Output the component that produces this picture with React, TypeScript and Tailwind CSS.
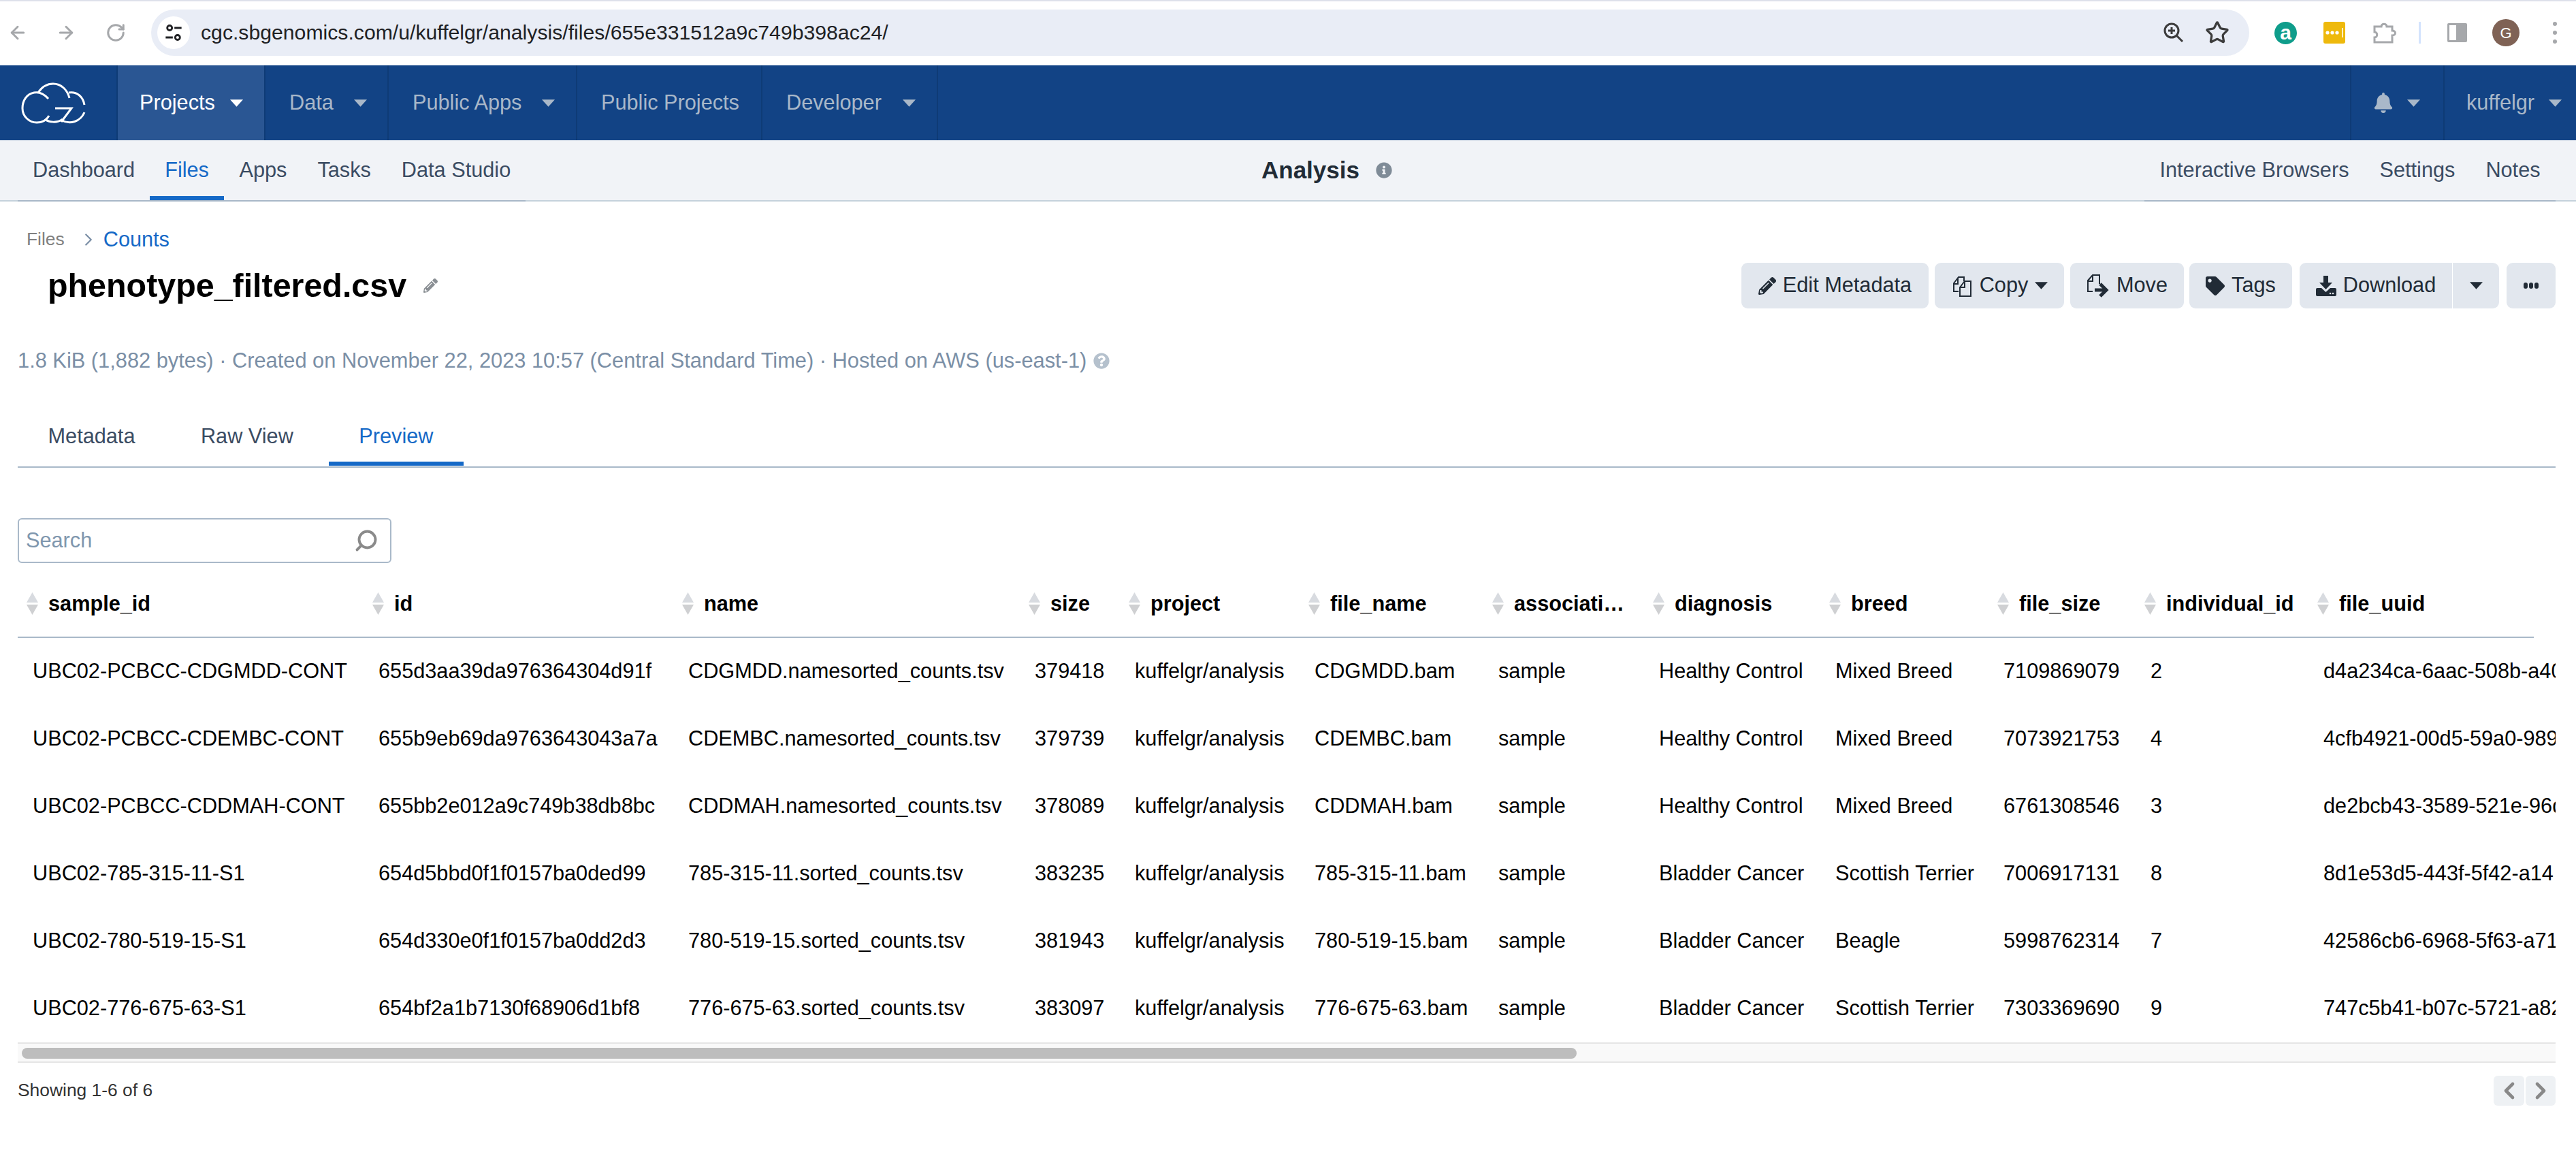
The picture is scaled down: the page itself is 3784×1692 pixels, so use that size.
import { ArrowLeft, ArrowRight, ChevronLeft, ChevronRight, RotateCw, Search, Star } from "lucide-react";
import { FaBell, FaInfoCircle, FaPencilAlt, FaQuestionCircle, FaTag } from "react-icons/fa";

const tableRows = [
  ["UBC02-PCBCC-CDGMDD-CONT", "655d3aa39da976364304d91f", "CDGMDD.namesorted_counts.tsv", "379418", "kuffelgr/analysis", "CDGMDD.bam", "sample", "Healthy Control", "Mixed Breed", "7109869079", "2", "d4a234ca-6aac-508b-a40"],
  ["UBC02-PCBCC-CDEMBC-CONT", "655b9eb69da9763643043a7a", "CDEMBC.namesorted_counts.tsv", "379739", "kuffelgr/analysis", "CDEMBC.bam", "sample", "Healthy Control", "Mixed Breed", "7073921753", "4", "4cfb4921-00d5-59a0-989"],
  ["UBC02-PCBCC-CDDMAH-CONT", "655bb2e012a9c749b38db8bc", "CDDMAH.namesorted_counts.tsv", "378089", "kuffelgr/analysis", "CDDMAH.bam", "sample", "Healthy Control", "Mixed Breed", "6761308546", "3", "de2bcb43-3589-521e-96d"],
  ["UBC02-785-315-11-S1", "654d5bbd0f1f0157ba0ded99", "785-315-11.sorted_counts.tsv", "383235", "kuffelgr/analysis", "785-315-11.bam", "sample", "Bladder Cancer", "Scottish Terrier", "7006917131", "8", "8d1e53d5-443f-5f42-a14"],
  ["UBC02-780-519-15-S1", "654d330e0f1f0157ba0dd2d3", "780-519-15.sorted_counts.tsv", "381943", "kuffelgr/analysis", "780-519-15.bam", "sample", "Bladder Cancer", "Beagle", "5998762314", "7", "42586cb6-6968-5f63-a71"],
  ["UBC02-776-675-63-S1", "654bf2a1b7130f68906d1bf8", "776-675-63.sorted_counts.tsv", "383097", "kuffelgr/analysis", "776-675-63.bam", "sample", "Bladder Cancer", "Scottish Terrier", "7303369690", "9", "747c5b41-b07c-5721-a82"],
];

const tableColumns = ["sample_id", "id", "name", "size", "project", "file_name", "association", "diagnosis", "breed", "file_size", "individual_id", "file_uuid"];

const gridCols = "grid grid-cols-[508px_455px_509px_147px_264px_270px_236px_259px_247px_216px_254px_600px] pl-[22px]";

function Caret({ className }: { className?: string }) {
  return (
    <svg viewBox="0 0 20 11" className={className} fill="currentColor">
      <path d="M0 0h20L10 11z" />
    </svg>
  );
}

function SortIcon() {
  return (
    <svg viewBox="0 0 17 33" className="h-[33px] w-[17px] shrink-0">
      <path d="M8.5 0L17 15H0z" fill="#d8dbe0" />
      <path d="M0 18h17L8.5 33z" fill="#cfd0d2" />
    </svg>
  );
}

function CloudLogo() {
  return (
    <svg viewBox="0 0 180 100" className="h-[100px] w-[180px] shrink-0" fill="none" stroke="#fff" strokeWidth="3">
      <path d="M71 44C64 36 56 34 50 35C39 37 33 47 33 58C33 70 43 79 54 79C62 79 68 76 72 69" />
      <path d="M56 35C62 26 70 22 78 22C90 22 99 31 102 43" />
      <path d="M101 35C113 33 122 41 124 53" />
      <path d="M81 58H105L90 78" />
      <path d="M66 74C72 79 84 80 92 74" />
      <path d="M91 76C103 82 118 78 124 64" />
    </svg>
  );
}

function CopyIcon() {
  return (
    <svg viewBox="0 0 32 32" className="h-[32px] w-[32px]" fill="none" stroke="currentColor" strokeWidth="2">
      <path d="M11 24H4V12L11 3H19V9" />
      <path d="M4 13H10V4" />
      <path d="M13 18L20 9H29V31H13Z" fill="#e2e7ee" />
      <path d="M13 18H20V10" />
    </svg>
  );
}

function MoveIcon() {
  return (
    <svg viewBox="0 0 34 34" className="h-[34px] w-[34px]" fill="none" stroke="currentColor" strokeWidth="2">
      <path d="M9 25H2V9L9 1H19V14" />
      <path d="M2 10H9V2" />
      <path d="M12 23H27" strokeWidth="5" />
      <path d="M20 14L29 23L20 32" strokeWidth="5" />
    </svg>
  );
}

function DownloadIcon() {
  return (
    <svg viewBox="0 0 30 30" className="h-[30px] w-[30px]" fill="currentColor">
      <path d="M11 0h7v10h6L14.500 20 5 10h6z" />
      <path d="M2 18h6l6.500 6L21 18h7a2 2 0 0 1 2 2v8a2 2 0 0 1-2 2H2a2 2 0 0 1-2-2v-8a2 2 0 0 1 2-2z" />
      <circle cx="21" cy="26" r="1.300" fill="#e2e7ee" />
      <circle cx="25" cy="26" r="1.300" fill="#e2e7ee" />
    </svg>
  );
}

function ActionButton({ width, children, className = "" }: { width: string; children: React.ReactNode; className?: string }) {
  return (
    <div className={`flex h-[67px] items-center justify-center gap-[10px] rounded-[9px] bg-[#e2e7ee] text-[30.7px] text-[#212b36] ${width} ${className}`}>
      {children}
    </div>
  );
}

function BrowserBar() {
  return (
    <div className="flex h-[94px] items-center border-t-2 border-[#dee1ea] bg-white">
      <ArrowLeft className="ml-[11px] h-[30px] w-[30px] text-[#a6a8ab]" strokeWidth={2.4} />
      <ArrowRight className="ml-[41px] h-[30px] w-[30px] text-[#a6a8ab]" strokeWidth={2.4} />
      <RotateCw className="ml-[43px] h-[30px] w-[30px] text-[#a6a8ab]" strokeWidth={2.4} />
      <div className="ml-[37px] flex h-[68px] w-[3082px] items-center rounded-full bg-[#e9edf6] pl-[9px]">
        <div className="flex h-[48px] w-[48px] items-center justify-center rounded-full bg-white">
          <svg viewBox="0 0 24 24" className="h-[28px] w-[28px]" fill="none" stroke="#202124" strokeWidth="2.400">
            <circle cx="7" cy="6" r="3" />
            <path d="M13 6h9M2 18h9" />
            <circle cx="17" cy="18" r="3" />
          </svg>
        </div>
        <span className="ml-[16px] text-[30.2px] text-[#202124]">cgc.sbgenomics.com/u/kuffelgr/analysis/files/655e331512a9c749b398ac24/</span>
        <svg viewBox="0 0 30 30" className="ml-auto h-[30px] w-[30px]" fill="none" stroke="#3c3c3c" strokeWidth="3">
          <circle cx="12" cy="12" r="10" />
          <path d="M12 7v10M7 12h10" />
          <path d="M19 19l9 9" />
        </svg>
        <Star className="ml-[31px] mr-[29px] h-[36px] w-[36px] text-[#3c3c3c]" strokeWidth={2.2} />
      </div>
      <div className="ml-[37px] flex h-[33px] w-[33px] items-center justify-center rounded-full bg-[#0f9d8b] text-[30px] font-bold leading-none text-white">a</div>
      <div className="ml-[39px] flex h-[32px] w-[32px] items-center justify-center rounded-[3px] bg-[#eeb90c]">
        <svg viewBox="0 0 32 32" className="h-[32px] w-[32px]" fill="#fff">
          <circle cx="6" cy="16" r="2.600" />
          <circle cx="13" cy="16" r="2.600" />
          <circle cx="20" cy="16" r="2.600" />
          <rect x="27" y="9" width="1.500" height="14" />
        </svg>
      </div>
      <svg viewBox="0 0 34 34" className="ml-[41px] h-[34px] w-[34px]" fill="none" stroke="#a6a8ab" strokeWidth="3">
        <path d="M2 8H12C12 3 20 3 20 8H28V14C34 14 34 21 28 21V31H2V24C7 24 7 16 2 16Z" />
      </svg>
      <div className="ml-[33px] h-[32px] w-[3px] bg-[#d3e3fd]" />
      <div className="ml-[39px] flex h-[28px] w-[29px] rounded-[2px] border-[3px] border-[#a6a8ab]">
        <div className="ml-auto h-full w-[13px] bg-[#a6a8ab]" />
      </div>
      <div className="ml-[37px] flex h-[40px] w-[40px] items-center justify-center rounded-full bg-[#7f6255] text-[22px] text-white">G</div>
      <div className="ml-[49px] flex flex-col gap-[7px]">
        <div className="h-[6px] w-[6px] rounded-full bg-[#a6a8ab]" />
        <div className="h-[6px] w-[6px] rounded-full bg-[#a6a8ab]" />
        <div className="h-[6px] w-[6px] rounded-full bg-[#a6a8ab]" />
      </div>
    </div>
  );
}

function TopNav() {
  const items = [
    { label: "Projects", width: "w-[217px]", pad: "pl-[32px]", caretGap: "ml-[22px]", active: true, caret: true },
    { label: "Data", width: "w-[181px]", pad: "pl-[35px]", caretGap: "ml-[30px]", active: false, caret: true },
    { label: "Public Apps", width: "w-[277px]", pad: "pl-[35px]", caretGap: "ml-[30px]", active: false, caret: true },
    { label: "Public Projects", width: "w-[272px]", pad: "pl-[35px]", caretGap: "", active: false, caret: false },
    { label: "Developer", width: "w-[258px]", pad: "pl-[35px]", caretGap: "ml-[31px]", active: false, caret: true },
  ];
  return (
    <div className="mt-[2px] flex h-[110px] bg-[#124385] text-[30.7px]">
      <div className="flex w-[173px] items-center border-r-2 border-[#0e3b76]">
        <CloudLogo />
      </div>
      {items.map((item) => (
        <div
          key={item.label}
          className={`flex items-center border-r-2 border-[#0e3b76] ${item.width} ${item.pad} ${item.active ? "bg-[#2a5693] text-white" : "text-[#a9b8c9]"}`}
        >
          <span>{item.label}</span>
          {item.caret ? <Caret className={`h-[11px] w-[19px] ${item.caretGap}`} /> : null}
        </div>
      ))}
      <div className="flex-1" />
      <div className="flex w-[137px] items-center border-l-2 border-[#0e3b76] pl-[33px] text-[#a9b8c9]">
        <FaBell className="h-[30px] w-[28px]" />
        <Caret className="ml-[21px] h-[11px] w-[19px]" />
      </div>
      <div className="flex w-[195px] items-center border-l-2 border-[#0e3b76] pl-[32px] text-[#a9b8c9]">
        <span>kuffelgr</span>
        <Caret className="ml-[21px] h-[11px] w-[19px]" />
      </div>
    </div>
  );
}

function SubNav() {
  return (
    <div className="flex h-[90px] border-b-2 border-[#c5d2dc] bg-[#f1f3f7] text-[30.7px] text-[#3b4c63]">
      <div className="relative top-[2px] ml-[26px] flex w-[746px] whitespace-nowrap border-b-2 border-[#a8b8c8]">
        <div className="flex items-center px-[22px] pb-[2px]">Dashboard</div>
        <div className="flex items-center border-b-[6px] border-[#1569c7] px-[22px] pt-[4px] text-[#1569c7]">Files</div>
        <div className="flex items-center px-[22.500px] pb-[2px]">Apps</div>
        <div className="flex items-center px-[22.500px] pb-[2px]">Tasks</div>
        <div className="flex items-center px-[22.500px] pb-[2px]">Data Studio</div>
      </div>
      <div className="flex flex-1 items-center pl-[1081px]">
        <span className="text-[35px] font-bold text-[#212b36]">Analysis</span>
        <FaInfoCircle className="ml-[24px] h-[24px] w-[24px] text-[#7f8b97]" />
      </div>
      <div className="relative top-[2px] mr-[30px] flex w-[604px] whitespace-nowrap border-b-2 border-[#a8b8c8]">
        <div className="flex items-center px-[22.500px] pb-[2px]">Interactive Browsers</div>
        <div className="flex items-center px-[22.500px] pb-[2px]">Settings</div>
        <div className="flex items-center px-[22.500px] pb-[2px]">Notes</div>
      </div>
    </div>
  );
}

function FileHeader() {
  return (
    <>
      <div className="mt-[36px] flex h-[40px] items-center">
        <span className="ml-[13px] text-[26.4px] text-[#808080]">Files</span>
        <ChevronRight className="ml-[20px] h-[30px] w-[30px] text-[#7b8fa6]" strokeWidth={1.8} />
        <span className="ml-[7px] text-[30.7px] text-[#1569c7]">Counts</span>
      </div>
      <div className="mt-[14px] flex h-[67px] items-center">
        <h1 className="ml-[44px] text-[48.4px] font-bold leading-none text-black">phenotype_filtered.csv</h1>
        <FaPencilAlt className="ml-[25px] h-[21px] w-[21px] text-[#8a8f94]" />
        <div className="ml-auto flex items-center">
          <ActionButton width="w-[275px]">
            <FaPencilAlt className="h-[26px] w-[26px]" />
            <span>Edit Metadata</span>
          </ActionButton>
          <ActionButton width="w-[190px]" className="ml-[9px]">
            <CopyIcon />
            <span>Copy</span>
            <Caret className="h-[11px] w-[19px]" />
          </ActionButton>
          <ActionButton width="w-[167px]" className="ml-[9px]">
            <MoveIcon />
            <span>Move</span>
          </ActionButton>
          <ActionButton width="w-[151px]" className="ml-[8px]">
            <FaTag className="h-[28px] w-[28px]" />
            <span>Tags</span>
          </ActionButton>
          <ActionButton width="w-[224px]" className="ml-[11px] rounded-r-none">
            <DownloadIcon />
            <span>Download</span>
          </ActionButton>
          <ActionButton width="w-[68px]" className="ml-[1px] rounded-l-none">
            <Caret className="h-[11px] w-[19px]" />
          </ActionButton>
          <ActionButton width="w-[72px]" className="ml-[11px]">
            <div className="flex gap-[2px]">
              <div className="h-[9px] w-[6px] rounded-[3px] bg-[#212b36]" />
              <div className="h-[9px] w-[6px] rounded-[3px] bg-[#212b36]" />
              <div className="h-[9px] w-[6px] rounded-[3px] bg-[#212b36]" />
            </div>
          </ActionButton>
        </div>
      </div>
      <div className="mt-[57px] flex h-[40px] items-center text-[30.8px] text-[#7b8fa6]">
        <span>1.8 KiB (1,882 bytes) · Created on November 22, 2023 10:57 (Central Standard Time) · Hosted on AWS (us-east-1)</span>
        <FaQuestionCircle className="ml-[10px] h-[24px] w-[24px] text-[#b5c1cd]" />
      </div>
      <div className="mt-[50px] flex h-[87px] gap-[7.500px] border-b-2 border-[#a9b9c9] text-[30.7px] text-[#3b4c63]">
        <div className="flex items-center px-[44.500px] pb-[3px]">Metadata</div>
        <div className="flex items-center px-[44.500px] pb-[3px]">Raw View</div>
        <div className="flex h-[84px] items-center border-b-[6px] border-[#1569c7] px-[44.500px] pt-[4px] text-[#1569c7]">Preview</div>
      </div>
    </>
  );
}

function DataTable() {
  return (
    <div className="mt-[12px] w-[3728px] overflow-hidden">
      <div className={`${gridCols} h-[98px] w-[3696px] items-center border-b-2 border-[#a9b9c9] text-[30.7px] font-bold text-black`}>
        {tableColumns.map((column) => (
          <div key={column} className="-ml-[9px] flex items-center gap-[15px] whitespace-nowrap">
            <SortIcon />
            <span className={column === "association" ? "max-w-[166px] truncate" : ""}>{column}</span>
          </div>
        ))}
      </div>
      {tableRows.map((row) => (
        <div key={row[0]} className={`${gridCols} h-[99px] w-[3900px] items-center text-[30.7px] text-black`}>
          {row.map((value, index) => (
            <div key={index} className="whitespace-nowrap">
              {value}
            </div>
          ))}
        </div>
      ))}
    </div>
  );
}

export default function App() {
  return (
    <div className="h-[1692px] w-[3784px] overflow-hidden bg-white font-['Liberation_Sans',Arial,sans-serif]">
      <BrowserBar />
      <TopNav />
      <SubNav />
      <div className="ml-[26px] w-[3728px]">
        <FileHeader />
        <div className="mt-[74px] flex h-[66px] w-[549px] items-center rounded-[6px] border-2 border-[#a9b9c9] pl-[10px] pr-[17px]">
          <span className="text-[30.7px] text-[#7f97ae]">Search</span>
          <Search className="ml-auto h-[36px] w-[36px] -scale-x-100 text-[#8a8a8a]" strokeWidth={2.6} />
        </div>
        <DataTable />
        <div className="h-[30px] border-y-2 border-[#e5e5e5] bg-[#f9f9f9] pl-[6px] pt-[6px]">
          <div className="h-[16px] w-[2284px] rounded-full bg-[#bdbdbd]" />
        </div>
        <div className="mt-[19px] flex h-[44px] items-center justify-between">
          <span className="text-[26.4px] text-[#333]">Showing 1-6 of 6</span>
          <div className="flex gap-[2px]">
            <div className="flex h-[44px] w-[45px] items-center justify-center rounded-[6px] bg-[#eef1f4]">
              <ChevronLeft className="h-[40px] w-[40px] text-[#888]" strokeWidth={2.8} />
            </div>
            <div className="flex h-[44px] w-[44px] items-center justify-center rounded-[6px] bg-[#eef1f4]">
              <ChevronRight className="h-[40px] w-[40px] text-[#888]" strokeWidth={2.8} />
            </div>
          </div>
        </div>
      </div>
    </div>
  );
}
